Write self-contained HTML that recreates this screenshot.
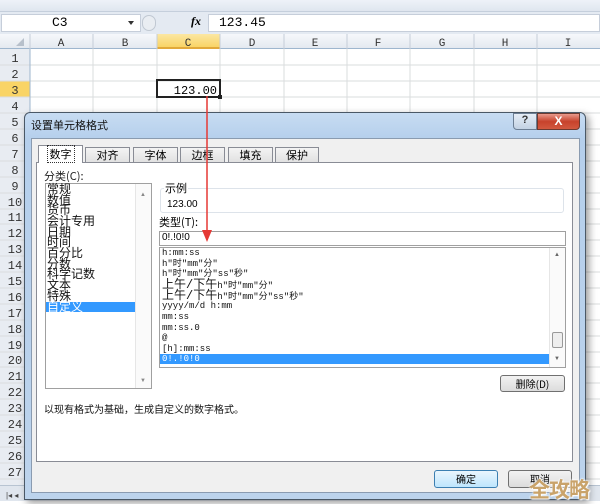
<!DOCTYPE html>
<html><head><meta charset="utf-8"><style>
*{margin:0;padding:0;box-sizing:border-box}
body{width:600px;height:501px;overflow:hidden;background:#fff;position:relative;font-family:"Liberation Sans","Noto Sans CJK SC",sans-serif;font-size:11px;color:#000}
.a{position:absolute}
.cj{font-family:"Noto Sans CJK SC",sans-serif}
.m{font-family:"Liberation Mono","Noto Sans CJK SC",monospace}
.ci{position:absolute;left:47px;height:12px;line-height:12px;font-size:12px;font-family:"Noto Sans CJK SC",sans-serif;color:#111;white-space:nowrap}
.fi{position:absolute;left:162px;height:12px;line-height:12px;font-size:9px;font-family:"Liberation Mono","Noto Sans CJK SC",monospace;color:#111;white-space:nowrap}
</style></head><body>
<div class="a" style="left:0;top:0;width:600px;height:12px;background:linear-gradient(#eef2f8,#dfe6ef);border-bottom:1px solid #c5cfdc"></div>
<div class="a" style="left:0;top:12px;width:600px;height:22px;background:#e4eaf2"></div>
<div class="a" style="left:1px;top:14px;width:140px;height:18px;background:#fff;border:1px solid #c6ceda"></div>
<div class="a m" style="left:52px;top:15px;font-size:13px">C3</div>
<div class="a" style="left:128px;top:21px;border-left:3px solid transparent;border-right:3px solid transparent;border-top:4px solid #333"></div>
<div class="a" style="left:142px;top:15px;width:14px;height:16px;border-radius:8px;background:#e9edf2;border:1px solid #c0c8d2"></div>
<div class="a" style="left:191px;top:14px;font-style:italic;font-family:'Liberation Serif',serif;font-size:12px;font-weight:bold">fx</div>
<div class="a" style="left:208px;top:14px;width:392px;height:18px;background:#fff;border:1px solid #c6ceda"></div>
<div class="a m" style="left:219px;top:15px;font-size:13px">123.45</div>
<div class="a" style="left:0;top:34px;width:600px;height:15px;background:linear-gradient(#f6f8fb,#e4e9f0);border-bottom:1px solid #9eb6ce"></div>
<div class="a" style="left:157px;top:34px;width:63px;height:15px;background:linear-gradient(#fbe7a3,#f9d466);border-bottom:2px solid #e2a93a"></div>
<svg class="a" style="left:0;top:34px" width="600" height="15">
<g stroke="#c5cdd8"><line x1="30" y1="0" x2="30" y2="15"/><line x1="93" y1="0" x2="93" y2="15"/><line x1="157" y1="0" x2="157" y2="15"/><line x1="220" y1="0" x2="220" y2="15"/><line x1="284" y1="0" x2="284" y2="15"/><line x1="347" y1="0" x2="347" y2="15"/><line x1="410" y1="0" x2="410" y2="15"/><line x1="474" y1="0" x2="474" y2="15"/><line x1="537" y1="0" x2="537" y2="15"/></g>
<polygon points="24,4 24,12 16,12" fill="#b7c0cb"/>
<g font-family="Liberation Mono,monospace" font-size="11" fill="#333" text-anchor="middle">
<text x="61" y="12">A</text><text x="125" y="12">B</text><text x="188" y="12">C</text><text x="252" y="12">D</text><text x="315" y="12">E</text><text x="378" y="12">F</text><text x="442" y="12">G</text><text x="505" y="12">H</text><text x="568" y="12">I</text></g>
</svg>
<svg class="a" style="left:0;top:49px" width="600" height="440">
<rect x="0" y="0" width="30" height="436" fill="#e8ecf2"/>
<rect x="0" y="32" width="30" height="16" fill="#f9d466"/>
<g stroke="#dadcdd">
<line x1="93" y1="0" x2="93" y2="440"/><line x1="157" y1="0" x2="157" y2="440"/><line x1="220" y1="0" x2="220" y2="440"/><line x1="284" y1="0" x2="284" y2="440"/><line x1="347" y1="0" x2="347" y2="440"/><line x1="410" y1="0" x2="410" y2="440"/><line x1="474" y1="0" x2="474" y2="440"/><line x1="537" y1="0" x2="537" y2="440"/>
</g>
<g stroke="#dadcdd">
<line x1="0" y1="16" x2="600" y2="16"/><line x1="0" y1="32" x2="600" y2="32"/><line x1="0" y1="48" x2="600" y2="48"/><line x1="0" y1="64" x2="600" y2="64"/><line x1="0" y1="80" x2="600" y2="80"/><line x1="0" y1="96" x2="600" y2="96"/><line x1="0" y1="112" x2="600" y2="112"/><line x1="0" y1="128" x2="600" y2="128"/><line x1="0" y1="144" x2="600" y2="144"/><line x1="0" y1="160" x2="600" y2="160"/><line x1="0" y1="175" x2="600" y2="175"/><line x1="0" y1="191" x2="600" y2="191"/><line x1="0" y1="207" x2="600" y2="207"/><line x1="0" y1="223" x2="600" y2="223"/><line x1="0" y1="239" x2="600" y2="239"/><line x1="0" y1="255" x2="600" y2="255"/><line x1="0" y1="271" x2="600" y2="271"/><line x1="0" y1="287" x2="600" y2="287"/><line x1="0" y1="303" x2="600" y2="303"/><line x1="0" y1="318" x2="600" y2="318"/><line x1="0" y1="334" x2="600" y2="334"/><line x1="0" y1="350" x2="600" y2="350"/><line x1="0" y1="366" x2="600" y2="366"/><line x1="0" y1="382" x2="600" y2="382"/><line x1="0" y1="398" x2="600" y2="398"/><line x1="0" y1="414" x2="600" y2="414"/><line x1="0" y1="430" x2="600" y2="430"/>
</g>
<line x1="30" y1="0" x2="30" y2="436" stroke="#9eb6ce"/>
<g font-family="Liberation Mono,monospace" font-size="12" fill="#333" text-anchor="middle">
<text x="15" y="13">1</text><text x="15" y="29">2</text><text x="15" y="45">3</text><text x="15" y="61">4</text><text x="15" y="77">5</text><text x="15" y="93">6</text><text x="15" y="109">7</text><text x="15" y="125">8</text><text x="15" y="141">9</text><text x="15" y="157">10</text><text x="15" y="172">11</text><text x="15" y="188">12</text><text x="15" y="204">13</text><text x="15" y="220">14</text><text x="15" y="236">15</text><text x="15" y="252">16</text><text x="15" y="268">17</text><text x="15" y="284">18</text><text x="15" y="300">19</text><text x="15" y="315">20</text><text x="15" y="331">21</text><text x="15" y="347">22</text><text x="15" y="363">23</text><text x="15" y="379">24</text><text x="15" y="395">25</text><text x="15" y="411">26</text><text x="15" y="427">27</text></g>
<rect x="157" y="31" width="63" height="17" fill="none" stroke="#222" stroke-width="2"/>
<rect x="218" y="46" width="4" height="4" fill="#222"/>
<text x="217" y="45" font-family="Liberation Mono,monospace" font-size="12" text-anchor="end">123.00</text>
</svg>
<div class="a" style="left:0;top:485px;width:600px;height:16px;background:#e0e6ee;border-top:1px solid #b8c4d2"></div>
<div class="a" style="left:6px;top:491px;font-size:8px;color:#444">|◂ ◂</div>
<!-- dialog -->
<div class="a" style="left:24px;top:112px;width:562px;height:388px;border-radius:6px 6px 0 0;background:linear-gradient(#c7dcf2,#b5cfec 26px,#bcd3ec);border:1px solid #4a5866;box-shadow:3px 3px 8px rgba(0,0,0,.4)"></div>
<div class="a cj" style="left:31px;top:117px;font-size:11px;color:#111">设置单元格格式</div>
<div class="a" style="left:513px;top:113px;width:24px;height:17px;background:linear-gradient(#e5edf6,#c3d2e3);border:1px solid #6d7f94;border-radius:0 0 0 4px;text-align:center;font-weight:bold;font-size:11px;color:#333">?</div>
<div class="a" style="left:537px;top:113px;width:43px;height:17px;background:linear-gradient(#e99a8c,#c7422c 50%,#d2593f);border:1px solid #6d3a30;border-radius:0 0 4px 0;text-align:center;font-weight:bold;font-size:12px;color:#fff;line-height:15px">X</div>
<div class="a" style="left:31px;top:138px;width:549px;height:355px;background:#f0f0f0;border:1px solid #8a9bb0"></div>
<div class="a" style="left:36px;top:162px;width:537px;height:300px;background:#fff;border:1px solid #898c95"></div>
<div class="a cj" style="left:38px;top:145px;width:45px;height:18px;background:#fff;border:1px solid #898c95;border-bottom:none;text-align:center;line-height:16px;font-size:11px"><span style="outline:1px dotted #333;padding:0 2px">数字</span></div>
<div class="a cj" style="left:85px;top:147px;width:45px;height:15px;background:linear-gradient(#f4f4f4,#e1e1e1);border:1px solid #898c95;border-bottom:none;text-align:center;line-height:14px;font-size:11px">对齐</div>
<div class="a cj" style="left:133px;top:147px;width:45px;height:15px;background:linear-gradient(#f4f4f4,#e1e1e1);border:1px solid #898c95;border-bottom:none;text-align:center;line-height:14px;font-size:11px">字体</div>
<div class="a cj" style="left:180px;top:147px;width:45px;height:15px;background:linear-gradient(#f4f4f4,#e1e1e1);border:1px solid #898c95;border-bottom:none;text-align:center;line-height:14px;font-size:11px">边框</div>
<div class="a cj" style="left:228px;top:147px;width:45px;height:15px;background:linear-gradient(#f4f4f4,#e1e1e1);border:1px solid #898c95;border-bottom:none;text-align:center;line-height:14px;font-size:11px">填充</div>
<div class="a cj" style="left:275px;top:147px;width:44px;height:15px;background:linear-gradient(#f4f4f4,#e1e1e1);border:1px solid #898c95;border-bottom:none;text-align:center;line-height:14px;font-size:11px">保护</div>
<div class="a cj" style="left:44px;top:168px;font-size:11px;color:#222">分类(C):</div>
<div class="a" style="left:45px;top:183px;width:107px;height:206px;border:1px solid #a0a0a0;background:#fff"></div>
<div class="a" style="left:135px;top:184px;width:16px;height:204px;background:#fafafa;border-left:1px solid #e6e6e6"></div>
<div class="a" style="left:140px;top:192px;font-size:6px;color:#888">▲</div>
<div class="a" style="left:140px;top:378px;font-size:6px;color:#888">▼</div>
<div class="a" style="left:46px;top:302px;width:89px;height:10px;background:#3399ff"></div>
<div class="ci" style="top:183px">常规</div>
<div class="ci" style="top:194px">数值</div>
<div class="ci" style="top:204px">货币</div>
<div class="ci" style="top:215px">会计专用</div>
<div class="ci" style="top:226px">日期</div>
<div class="ci" style="top:236px">时间</div>
<div class="ci" style="top:247px">百分比</div>
<div class="ci" style="top:258px">分数</div>
<div class="ci" style="top:268px">科学记数</div>
<div class="ci" style="top:279px">文本</div>
<div class="ci" style="top:290px">特殊</div>
<div class="ci" style="top:301px;color:#fff">自定义</div>
<div class="a" style="left:160px;top:188px;width:404px;height:25px;border:1px solid #dde3ea;border-radius:3px"></div>
<div class="a cj" style="left:164px;top:180px;font-size:11px;background:#fff;padding:0 1px">示例</div>
<div class="a" style="left:167px;top:199px;font-size:10px">123.00</div>
<div class="a cj" style="left:159px;top:214px;font-size:11px">类型(T):</div>
<div class="a" style="left:159px;top:231px;width:407px;height:15px;border:1px solid #a0a0a0;background:#fff"></div>
<div class="a" style="left:162px;top:232px;font-size:10px">0!.!0!0</div>
<div class="a" style="left:159px;top:247px;width:407px;height:121px;border:1px solid #a0a0a0;background:#fff"></div>
<div class="a" style="left:549px;top:248px;width:16px;height:119px;background:#fafafa;border-left:1px solid #e6e6e6"></div>
<div class="a" style="left:552px;top:332px;width:11px;height:16px;background:#eee;border:1px solid #999;border-radius:2px"></div>
<div class="a" style="left:554px;top:252px;font-size:6px;color:#666">▲</div>
<div class="a" style="left:554px;top:356px;font-size:6px;color:#666">▼</div>
<div class="a" style="left:160px;top:354px;width:389px;height:10px;background:#3399ff"></div>
<div class="fi" style="top:247px">h:mm:ss</div>
<div class="fi" style="top:258px">h"时"mm"分"</div>
<div class="fi" style="top:268px">h"时"mm"分"ss"秒"</div>
<div class="fi" style="top:279px"><span style="font-size:12px">上午/下午</span>h"时"mm"分"</div>
<div class="fi" style="top:290px"><span style="font-size:12px">上午/下午</span>h"时"mm"分"ss"秒"</div>
<div class="fi" style="top:300px">yyyy/m/d h:mm</div>
<div class="fi" style="top:311px">mm:ss</div>
<div class="fi" style="top:322px">mm:ss.0</div>
<div class="fi" style="top:332px">@</div>
<div class="fi" style="top:343px">[h]:mm:ss</div>
<div class="fi" style="top:353px;color:#fff">0!.!0!0</div>
<div class="a cj" style="left:500px;top:375px;width:65px;height:17px;border:1px solid #707070;border-radius:3px;background:linear-gradient(#f2f2f2,#dcdcdc);text-align:center;font-size:10px;line-height:15px">删除(D)</div>
<div class="a cj" style="left:44px;top:401px;font-size:10px;color:#111">以现有格式为基础，生成自定义的数字格式。</div>
<div class="a cj" style="left:434px;top:470px;width:64px;height:18px;border:1px solid #3c7fb1;border-radius:3px;background:linear-gradient(#eaf6fd,#bee6fd);text-align:center;font-size:10px;line-height:16px">确定</div>
<div class="a cj" style="left:508px;top:470px;width:64px;height:18px;border:1px solid #707070;border-radius:3px;background:linear-gradient(#f2f2f2,#dcdcdc);text-align:center;font-size:10px;line-height:16px">取消</div>
<svg class="a" style="left:200px;top:96px" width="14" height="150"><line x1="7" y1="0" x2="7" y2="136" stroke="#e53935" stroke-width="1.5"/><polygon points="2,134 12,134 7,146" fill="#e53935"/></svg>
<div class="a cj" style="left:529px;top:474px;font-size:21px;font-weight:bold;color:#c9a36a;letter-spacing:-1px;text-shadow:0 0 2px #fff,0 0 2px #fff,1px 1px 1px #fff">全攻略</div>
</body></html>
